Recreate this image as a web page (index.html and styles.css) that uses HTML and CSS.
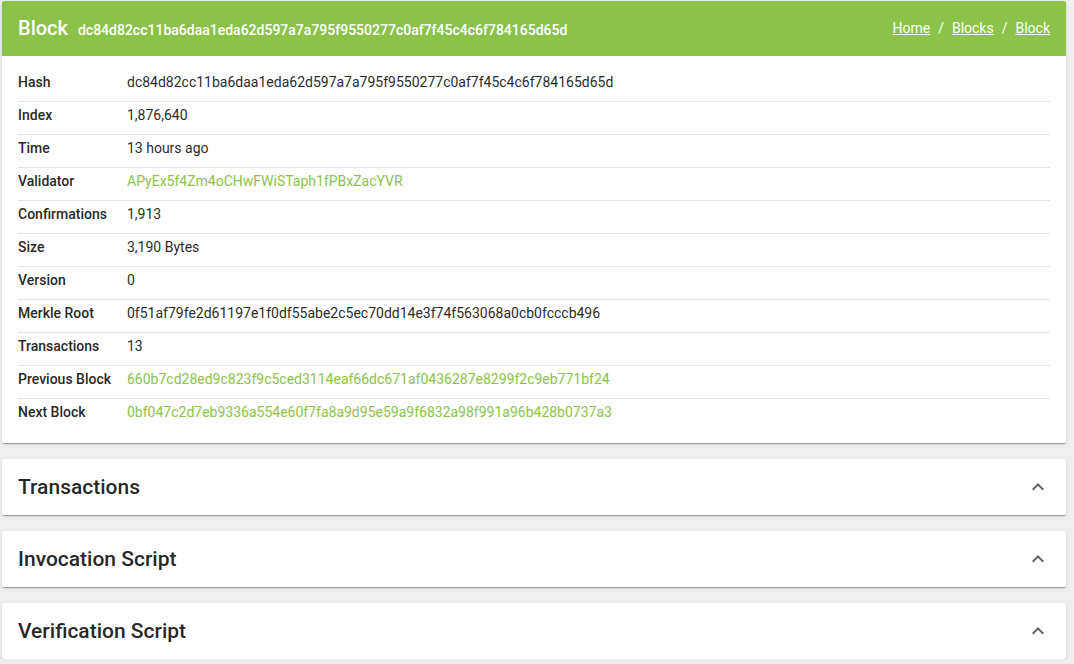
FILE: index.html
```html
<!DOCTYPE html>
<html>
<head>
<meta charset="utf-8">
<link rel="stylesheet" href="styles.css">
</head>
<body>
<div class="page">
  <section class="card">
    <header class="card-head">
      <div class="title"><span class="title-main">Block</span><span class="title-hash">dc84d82cc11ba6daa1eda62d597a7a795f9550277c0af7f45c4c6f784165d65d</span></div>
      <nav class="crumbs"><a href="#">Home</a><span class="sep">/</span><a href="#">Blocks</a><span class="sep">/</span><a href="#">Block</a></nav>
    </header>
    <div class="details">
      <div class="row"><div class="label">Hash</div><div class="value">dc84d82cc11ba6daa1eda62d597a7a795f9550277c0af7f45c4c6f784165d65d</div></div>
      <div class="row"><div class="label">Index</div><div class="value">1,876,640</div></div>
      <div class="row"><div class="label">Time</div><div class="value">13 hours ago</div></div>
      <div class="row"><div class="label">Validator</div><div class="value link">APyEx5f4Zm4oCHwFWiSTaph1fPBxZacYVR</div></div>
      <div class="row"><div class="label">Confirmations</div><div class="value">1,913</div></div>
      <div class="row"><div class="label">Size</div><div class="value">3,190 Bytes</div></div>
      <div class="row"><div class="label">Version</div><div class="value">0</div></div>
      <div class="row"><div class="label">Merkle Root</div><div class="value">0f51af79fe2d61197e1f0df55abe2c5ec70dd14e3f74f563068a0cb0fcccb496</div></div>
      <div class="row"><div class="label">Transactions</div><div class="value">13</div></div>
      <div class="row"><div class="label">Previous Block</div><div class="value link">660b7cd28ed9c823f9c5ced3114eaf66dc671af0436287e8299f2c9eb771bf24</div></div>
      <div class="row"><div class="label">Next Block</div><div class="value link">0bf047c2d7eb9336a554e60f7fa8a9d95e59a9f6832a98f991a96b428b0737a3</div></div>
    </div>
  </section>
  <section class="card panel"><h2>Transactions</h2><svg class="chev" width="12" height="8" viewBox="0 0 12 8"><path d="M1.4 7.4 6 2.8l4.6 4.6L12 6 6 0 0 6z" fill="#616161"/></svg></section>
  <section class="card panel"><h2>Invocation Script</h2><svg class="chev" width="12" height="8" viewBox="0 0 12 8"><path d="M1.4 7.4 6 2.8l4.6 4.6L12 6 6 0 0 6z" fill="#616161"/></svg></section>
  <section class="card panel"><h2>Verification Script</h2><svg class="chev" width="12" height="8" viewBox="0 0 12 8"><path d="M1.4 7.4 6 2.8l4.6 4.6L12 6 6 0 0 6z" fill="#616161"/></svg></section>
</div>
</body>
</html>
```
FILE: styles.css
```css
html, body { margin: 0; padding: 0; background: #eeeeee; }
body { font-family: Roboto, "Noto Sans", sans-serif; color: rgba(0,0,0,0.87); font-size: 14px; }
.page { padding: 1px 8px 0 2px; display: flex; flex-direction: column; gap: 16px; }
.card { background: #fff; border-radius: 2px; box-shadow: 0 2px 1px -1px rgba(0,0,0,.2), 0 1px 1px 0 rgba(0,0,0,.14), 0 1px 3px 0 rgba(0,0,0,.12); overflow: hidden; }
.card-head { background: #8bc34a; height: 53px; display: flex; align-items: center; justify-content: space-between; padding: 0 16px 2px; color: #fff; }
.title { display: flex; align-items: baseline; gap: 10px; }
.title-main { font-size: 20px; font-weight: 500; }
.title-hash { font-size: 14px; font-weight: 500; }
.crumbs { display: flex; align-items: center; font-size: 14px; }
.crumbs a { color: #fff; text-decoration: underline; }
.sep { padding: 0 8px; }
.details { padding: 13px 16px 12px; }
.row { display: flex; padding: 3px 0 9px; border-bottom: 1px solid #e6e6e6; line-height: 20px; }
.row:last-child { border-bottom: none; }
.label { width: 109px; flex: none; font-weight: 500; }
.value { flex: 1; }
.link { color: #8bc34a; }
.panel { height: 56px; display: flex; align-items: center; justify-content: space-between; padding: 0 22px 0 16px; }
.panel h2 { margin: 0; font-size: 21px; font-weight: 500; }
```
